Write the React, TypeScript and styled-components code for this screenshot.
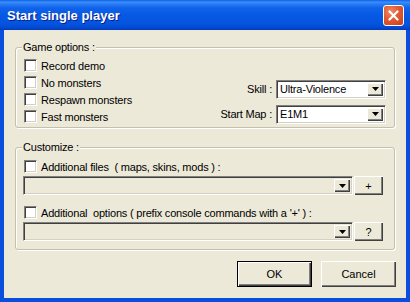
import React from 'react';
import styled, { createGlobalStyle } from 'styled-components';

const GlobalStyle = createGlobalStyle`
  html, body {
    margin: 0;
    padding: 0;
    background: #ffffff;
  }
  body {
    font-family: 'Liberation Sans', Arial, sans-serif;
    font-size: 11px;
    color: #000000;
  }
`;

const Window = styled.div`
  width: 410px;
  height: 302px;
  display: flex;
  flex-direction: column;
`;

const TitleBar = styled.div`
  height: 30px;
  flex: none;
  display: flex;
  align-items: flex-start;
  justify-content: space-between;
  padding: 0 6px 0 7px;
  box-sizing: border-box;
  background: linear-gradient(
    180deg,
    #0a5fe8 0px,
    #3b8ef8 2px,
    #2a7df4 4px,
    #0f63ea 8px,
    #0759e4 15px,
    #0454df 24px,
    #0348cf 28px,
    #0239b8 30px
  );
`;

const Title = styled.div`
  margin-top: 8px;
  font: bold 13px 'Liberation Sans', Arial, sans-serif;
  line-height: 16px;
  color: #ffffff;
  text-shadow: 1px 1px #0a1e8c;
`;

const CloseButton = styled.div`
  width: 21px;
  height: 21px;
  margin-top: 5px;
  box-sizing: border-box;
  border: 1px solid #ffffff;
  border-radius: 3px;
  background: radial-gradient(circle at 35% 30%, #f08a68 0%, #e05a32 45%, #c8401c 100%);
  display: flex;
  align-items: center;
  justify-content: center;
`;

const Frame = styled.div`
  flex: 1;
  display: flex;
  padding: 0 4px 4px;
  background: #0b4ddc;
`;

const Client = styled.div`
  flex: 1;
  display: flex;
  flex-direction: column;
  padding: 10px 11px 0;
  background: #ece9d8;
`;

const Group = styled.fieldset<{ $gap?: number }>`
  margin: ${(p) => p.$gap ?? 0}px 0 0;
  padding: 3px 8px 2px;
  border: 1px solid #c3c0b0;
  border-radius: 3px;
  box-shadow: inset 1px 1px #ffffff, 1px 1px #ffffff;
  min-width: 0;
`;

const GroupTitle = styled.legend`
  margin-left: -2px;
  padding: 0 1px;
  line-height: 14px;
  letter-spacing: -0.2px;
  background: #ece9d8;
`;

const OptionsBody = styled.div`
  display: flex;
  justify-content: space-between;
`;

const CustomBody = styled.div`
  padding: 1px 0 6px;
`;

const CheckList = styled.div`
  display: flex;
  flex-direction: column;
`;

const CheckRow = styled.label<{ $top?: number }>`
  display: flex;
  align-items: center;
  gap: 4px;
  height: 17px;
  margin-top: ${(p) => p.$top ?? 0}px;
  white-space: pre;
  letter-spacing: -0.2px;
`;

const Box = styled.span`
  width: 13px;
  height: 13px;
  flex: none;
  box-sizing: border-box;
  background: #ffffff;
  border-top: 1px solid #808080;
  border-left: 1px solid #808080;
  border-right: 1px solid #ffffff;
  border-bottom: 1px solid #ffffff;
  box-shadow: inset 1px 1px #404040, inset -1px -1px #d4d0c8;
`;

const SelectGrid = styled.div`
  display: grid;
  grid-template-columns: auto 110px;
  gap: 3px 4px;
  align-items: center;
  margin-top: 21px;
`;

const FieldLabel = styled.span`
  text-align: right;
  letter-spacing: -0.2px;
`;

const Combo = styled.div<{ $disabled?: boolean }>`
  height: 19px;
  flex: 1;
  display: flex;
  align-items: stretch;
  box-sizing: border-box;
  padding: 2px;
  background: ${(p) => (p.$disabled ? '#ece9d8' : '#ffffff')};
  border-top: 1px solid #808080;
  border-left: 1px solid #808080;
  border-right: 1px solid #ffffff;
  border-bottom: 1px solid #ffffff;
  box-shadow: inset 1px 1px #404040, inset -1px -1px #d4d0c8;
`;

const ComboText = styled.span`
  flex: 1;
  padding-left: 1px;
  line-height: 13px;
  letter-spacing: -0.2px;
`;

const DropButton = styled.span`
  width: 16px;
  flex: none;
  display: flex;
  align-items: center;
  justify-content: center;
  background: #ece9d8;
  box-shadow: inset 1px 1px #ffffff, inset -1px -1px #404040, inset -2px -2px #808080;
`;

const FileRow = styled.div<{ $top?: number }>`
  display: flex;
  gap: 1px;
  margin: ${(p) => p.$top ?? 0}px 3px 0 -1px;
`;

const Button = styled.button<{ $default?: boolean; $w: number; $h: number }>`
  width: ${(p) => p.$w}px;
  height: ${(p) => p.$h}px;
  flex: none;
  padding: 0;
  font: 11px 'Liberation Sans', Arial, sans-serif;
  color: #000000;
  background: #ece9d8;
  border: ${(p) => (p.$default ? '1px solid #000000' : 'none')};
  border-radius: 0;
  box-shadow: inset 1px 1px #ffffff, inset -1px -1px #404040, inset -2px -2px #808080;
`;

const Footer = styled.div`
  display: flex;
  justify-content: flex-end;
  gap: 9px;
  margin: 11px -1px 0 0;
`;

const Arrow = () => (
  <svg width="7" height="4" viewBox="0 0 7 4">
    <path d="M0 0h7L3.5 4z" fill="#000" />
  </svg>
);

const CloseIcon = () => (
  <svg width="11" height="11" viewBox="0 0 11 11">
    <path d="M1.5 1.5l8 8M9.5 1.5l-8 8" stroke="#fff" strokeWidth="2.2" strokeLinecap="round" />
  </svg>
);

const checks = ['Record demo', 'No monsters', 'Respawn monsters', 'Fast monsters'];

const App = (): JSX.Element => (
  <>
    <GlobalStyle />
    <Window>
      <TitleBar>
        <Title>Start single player</Title>
        <CloseButton>
          <CloseIcon />
        </CloseButton>
      </TitleBar>
      <Frame>
        <Client>
          <Group>
            <GroupTitle>Game options :</GroupTitle>
            <OptionsBody>
              <CheckList>
                {checks.map((c) => (
                  <CheckRow key={c}>
                    <Box />
                    {c}
                  </CheckRow>
                ))}
              </CheckList>
              <SelectGrid>
                <FieldLabel>Skill :</FieldLabel>
                <Combo>
                  <ComboText>Ultra-Violence</ComboText>
                  <DropButton><Arrow /></DropButton>
                </Combo>
                <FieldLabel>Start Map :</FieldLabel>
                <Combo>
                  <ComboText>E1M1</ComboText>
                  <DropButton><Arrow /></DropButton>
                </Combo>
              </SelectGrid>
            </OptionsBody>
          </Group>

          <Group $gap={12}>
            <GroupTitle>Customize :</GroupTitle>
            <CustomBody>
              <CheckRow>
                <Box />
                {'Additional files  ( maps, skins, mods ) :'}
              </CheckRow>
              <FileRow $top={1}>
                <Combo $disabled>
                  <ComboText />
                  <DropButton><Arrow /></DropButton>
                </Combo>
                <Button $w={29} $h={19}>+</Button>
              </FileRow>
              <CheckRow $top={9}>
                <Box />
                {"Additional  options ( prefix console commands with a '+' ) :"}
              </CheckRow>
              <FileRow $top={1}>
                <Combo $disabled>
                  <ComboText />
                  <DropButton><Arrow /></DropButton>
                </Combo>
                <Button $w={29} $h={19}>?</Button>
              </FileRow>
            </CustomBody>
          </Group>

          <Footer>
            <Button $default $w={75} $h={26}>OK</Button>
            <Button $w={75} $h={26}>Cancel</Button>
          </Footer>
        </Client>
      </Frame>
    </Window>
  </>
);

export default App;
